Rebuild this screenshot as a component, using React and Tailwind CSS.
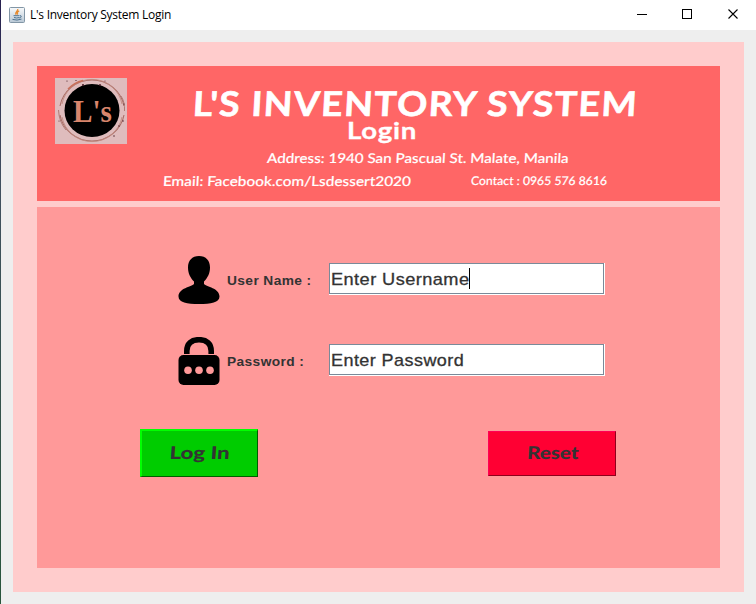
import React from "react";

function JavaIcon() {
  return (
    <svg width="16" height="16" viewBox="0 0 16 16" className="shrink-0">
      <defs>
        <linearGradient id="jb" x1="0" y1="0" x2="0" y2="1">
          <stop offset="0" stopColor="#f8fafb" />
          <stop offset="1" stopColor="#b9c8d5" />
        </linearGradient>
      </defs>
      <rect x=".5" y=".5" width="15" height="15" rx="1" fill="url(#jb)" stroke="#8296a6" />
      <path d="M8.700 2C9.500 4 5.500 4.800 7 7.800M10.200 3.800C8 5 7.800 6 8.600 7.600" fill="none" stroke="#e78a2d" strokeWidth="1.300" />
      <path d="M4.500 8.700h6M5 10.500q2.500 1 5.500 0M11 8.500q2.200.2.700 2l-1.300.6M3.500 12.400q4.500 1.500 9-.3" fill="none" stroke="#4e7390" strokeWidth="1" />
    </svg>
  );
}

function Logo() {
  return (
    <svg width="72" height="66" viewBox="0 0 72 66" className="block shrink-0">
      <rect width="72" height="66" fill="#dfbcbd" />
      <g fill="none">
        <path d="M5 28A32.500 31.500 0 0 1 69 28M69 37A32.500 31.500 0 0 1 5 37" stroke="#a96c66" strokeWidth="1.100" />
        <path d="M7 26A30.500 30 0 0 1 67 26M67 39A30.500 30 0 0 1 7 39" stroke="#c18a80" strokeWidth=".9" />
        <path d="M3.500 32Q4 44 11 52M66 18Q70 24 69.500 33" stroke="#a9746d" strokeWidth=".9" />
        <path d="M13 11A32 32 0 0 1 28 2.500" stroke="#c96f59" strokeWidth="1.600" />
      </g>
      <ellipse cx="37" cy="32.500" rx="27.500" ry="26.500" fill="#000" />
      <g fill="#3f1620">
        <circle cx="12" cy="3" r=".6" /><circle cx="21" cy="2.500" r=".6" /><circle cx="50" cy="3" r=".5" />
        <circle cx="69" cy="26" r=".6" /><circle cx="68" cy="43" r=".7" />
        <circle cx="64" cy="48" r=".7" /><circle cx="59" cy="58" r=".7" />
        <circle cx="4" cy="43" r=".5" /><circle cx="28" cy="7" r="1" /><circle cx="45" cy="7" r=".9" />
      </g>
      <text x="18" y="44" fontFamily="Liberation Serif, serif" fontWeight="700" fontSize="31" fill="#d8856c" textLength="39" lengthAdjust="spacingAndGlyphs">L's</text>
    </svg>
  );
}

function UserIcon() {
  return (
    <svg width="42" height="48" viewBox="0 0 42 48" className="shrink-0">
      <path d="M21 0C28 0 32 4.500 32 11.500C32 17.500 29.500 22 26 25.500V28C28.500 31 41.500 32 41.500 40.500C41.500 46.500 33 48 21 48S.5 46.500.5 40.500C.5 32 13.500 31 16 28V25.500C12.500 22 10 17.500 10 11.500C10 4.500 14 0 21 0Z" />
    </svg>
  );
}

function LockIcon() {
  return (
    <svg width="42" height="48" viewBox="0 0 42 48" className="shrink-0">
      <path d="M8.800 17V14C8.800 6.500 13.500 2.700 21 2.700S33.200 6.500 33.200 14V17" fill="none" stroke="#000" strokeWidth="5.600" />
      <rect x=".5" y="18" width="41" height="30" rx="5" />
      <g fill="#ff9999">
        <circle cx="10" cy="33.300" r="3.800" /><circle cx="21" cy="33.300" r="3.800" /><circle cx="32" cy="33.300" r="3.800" />
      </g>
    </svg>
  );
}

function Field({ icon, label, value, valueClass, caret }) {
  return (
    <div className="flex h-12 items-center pl-[141px]">
      {icon}
      <div className="w-[109px] pt-[2px] pl-[7px] font-['Liberation_Sans',sans-serif] text-[12.5px] leading-4 font-bold whitespace-nowrap text-[#333]">
        <span className="inline-block origin-left scale-x-[1.1] tracking-[0.35px]">{label}</span>
      </div>
      <div className="mb-0.5 h-[32px] w-[276px] border-r border-b border-white">
        <div className="flex h-[31px] w-[275px] items-center border border-[#7a8a99] bg-white pl-[1px] font-['Liberation_Sans',sans-serif] text-[17px] leading-5 whitespace-nowrap text-[#333] [-webkit-text-stroke:0.3px_#333]">
          <span className={valueClass}>{value}</span>
          {caret && <span className="h-[21px] w-px shrink-0 bg-black" />}
        </div>
      </div>
    </div>
  );
}

export default function App() {
  return (
    <div className="flex h-[604px] w-[756px] overflow-hidden bg-[#eee]">
      <div className="w-px shrink-0 bg-linear-to-b from-[#27204f] via-[#40505f] via-30% to-[#28543b]" />
      <div className="flex w-[755px] flex-col">
        <header className="flex h-[30px] shrink-0 items-center bg-white pl-2">
          <JavaIcon />
          <span className="ml-[5px] font-['Open_Sans',sans-serif] text-[12px] leading-4 tracking-[-0.27px] whitespace-nowrap text-black">L's Inventory System Login</span>
          <svg width="102" height="10" viewBox="0 0 102 10" className="mr-[17px] mb-0.5 ml-auto" fill="none" stroke="#000">
            <path d="M0 5.500h10M45.500.5h9v9h-9z" shapeRendering="crispEdges" />
            <path d="M91.500.5l9 9M100.500.5l-9 9" strokeWidth="1.100" />
          </svg>
        </header>
        <main className="mt-3 ml-3 flex h-[550px] w-[731px] flex-col gap-1.5 bg-[#ffcccc] p-6">
          <section className="flex h-[135px] w-[683px] shrink-0 bg-[#ff6666] pt-3 pl-[18px] font-[Lato,sans-serif] font-bold whitespace-nowrap text-white">
            <Logo />
            <div className="flex w-[580px] flex-col">
              <div className="h-[40px] pl-[66px] pt-[5px] text-[34px] leading-[40px]">
                <span className="inline-block origin-left scale-x-[1.10] -skew-x-3 tracking-[1.2px] [-webkit-text-stroke:0.6px_#fff]">L'S INVENTORY SYSTEM</span>
              </div>
              <div className="h-[28px] pl-[220px] text-[23px] leading-[24px]">
                <span className="inline-block origin-left scale-x-[1.2] tracking-[0.6px] [-webkit-text-stroke:0.3px_#fff]">Login</span>
              </div>
              <div className="h-[24px] pl-[140px] text-[13.5px] leading-[24px]">
                <span className="inline-block origin-left scale-x-[1.125] -skew-x-3 font-medium [-webkit-text-stroke:0.15px_#fff]">Address: 1940 San Pascual St. Malate, Manila</span>
              </div>
              <div className="flex h-[22px] pl-[36px] text-[13.5px] leading-[22px]">
                <div className="w-[308px]">
                  <span className="inline-block origin-left scale-x-[1.139] -skew-x-3 font-medium [-webkit-text-stroke:0.15px_#fff]">Email: Facebook.com/Lsdessert2020</span>
                </div>
                <span className="inline-block origin-left scale-x-[1.02] -skew-x-3 text-[12px] font-medium [-webkit-text-stroke:0.15px_#fff]">Contact : 0965 576 8616</span>
              </div>
            </div>
          </section>
          <section className="flex h-[361px] w-[683px] flex-col bg-[#ff9999] pt-[49px]">
            <Field icon={<UserIcon />} label="User Name :" value="Enter Username" valueClass="mr-[9px] inline-block origin-left scale-x-[1.07] pt-0.5 tracking-[0.4px]" caret />
            <div className="h-[33px]" />
            <Field icon={<LockIcon />} label="Password :" value="Enter Password" valueClass="inline-block origin-left scale-x-[1.06] pt-0.5 tracking-[0.4px]" />
            <div className="mt-[44px] flex items-start pl-[103px] font-[Lato,sans-serif] text-[17.5px] font-black text-[#333]">
              <button className="flex h-[48px] w-[118px] items-center justify-center border-t-2 border-r border-b border-l-2 border-t-[#00ff00] border-r-[#005c00] border-b-[#005c00] border-l-[#00ff00] bg-[#00cc00]">
                <span className="inline-block scale-x-[1.27] -skew-x-3 whitespace-nowrap">Log In</span>
              </button>
              <button className="mt-[2px] ml-[230px] flex h-[45px] w-[128px] items-center justify-center border border-t-[#ff0055] border-r-[#8f001c] border-b-[#8f001c] border-l-[#ff0055] bg-[#ff0033] pl-0.5">
                <span className="inline-block scale-x-[1.18] -skew-x-3">Reset</span>
              </button>
            </div>
          </section>
        </main>
      </div>
    </div>
  );
}
